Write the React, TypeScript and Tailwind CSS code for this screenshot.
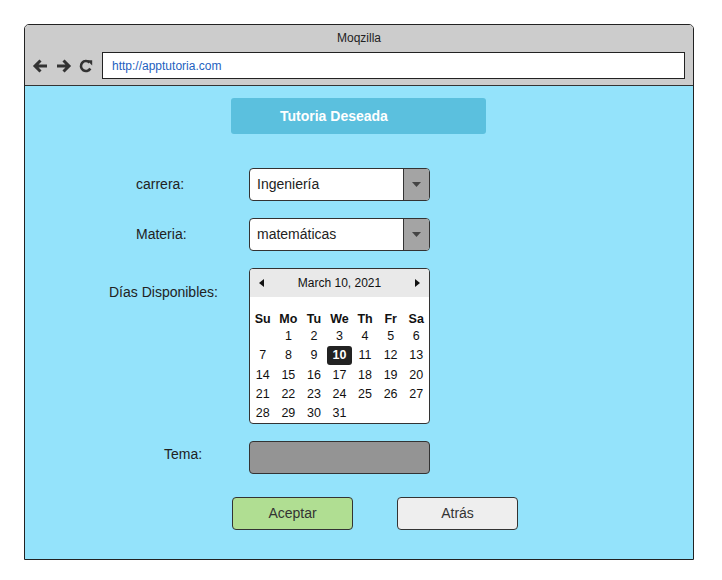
import React from "react";

const WEEKS: (number | null)[][] = [
  [null, 1, 2, 3, 4, 5, 6],
  [7, 8, 9, 10, 11, 12, 13],
  [14, 15, 16, 17, 18, 19, 20],
  [21, 22, 23, 24, 25, 26, 27],
  [28, 29, 30, 31, null, null, null],
];

const DAYS = ["Su", "Mo", "Tu", "We", "Th", "Fr", "Sa"];

function Select({ value }: { value: string }) {
  return (
    <div className="flex h-[33px] w-[181px] overflow-hidden rounded-[4px] border border-[#333] bg-white">
      <div className="flex flex-1 items-center pl-[7px] text-[14px] text-[#222]">{value}</div>
      <div className="flex w-[26px] items-center justify-center border-l border-[#333] bg-[#a4a4a4]">
        <svg width="9" height="5" viewBox="0 0 9 5">
          <path d="M0 0h9L4.5 5z" fill="#444" />
        </svg>
      </div>
    </div>
  );
}

function Calendar() {
  return (
    <div className="w-[181px] overflow-hidden rounded-[4px] border border-[#333] bg-white text-[12.5px] text-[#111]">
      <div className="flex h-[28px] items-center justify-between bg-[#e9e9e9] px-[9px]">
        <svg width="5" height="8" viewBox="0 0 5 8">
          <path d="M5 0v8L0 4z" fill="#111" />
        </svg>
        <span className="text-[12px]">March 10, 2021</span>
        <svg width="5" height="8" viewBox="0 0 5 8">
          <path d="M0 0v8l5-4z" fill="#111" />
        </svg>
      </div>
      <div className="pt-[13px]">
        <div className="grid h-[17px] grid-cols-7 items-center font-bold">
          {DAYS.map((d) => (
            <div key={d} className="text-center">
              {d}
            </div>
          ))}
        </div>
        {WEEKS.map((w, i) => (
          <div key={i} className="grid h-[19.2px] grid-cols-7 items-center">
            {w.map((n, j) => (
              <div key={j} className="flex justify-center">
                {n === 10 ? (
                  <span className="flex h-[19px] w-[26px] items-center justify-center rounded-[3px] bg-[#222] font-bold text-white">
                    10
                  </span>
                ) : (
                  <span>{n ?? ""}</span>
                )}
              </div>
            ))}
          </div>
        ))}
      </div>
    </div>
  );
}

export default function App() {
  return (
    <div className="h-[580px] w-[722px] bg-white pl-[24px] pt-[24px] font-['Liberation_Sans',Arial,sans-serif]">
      <div className="flex h-[536px] w-[670px] flex-col overflow-hidden rounded-t-[5px] border border-[#222]">
        {/* browser chrome */}
        <div className="h-[61px] border-b border-[#333] bg-[#cccccc]">
          <div className="pt-[4px] text-center text-[12px] text-[#222]">Moqzilla</div>
          <div className="mt-[5px] flex items-center">
            <div className="flex items-center gap-[6px] pl-[7px]">
              <svg width="17" height="16" viewBox="0 0 17 16">
                <path d="M15 8H3M8.5 2.5L3 8l5.5 5.5" stroke="#333" strokeWidth="3" fill="none" />
              </svg>
              <svg width="17" height="16" viewBox="0 0 17 16">
                <path d="M2 8h12M8.5 2.5L14 8l-5.5 5.5" stroke="#333" strokeWidth="3" fill="none" />
              </svg>
              <svg width="16" height="16" viewBox="0 0 16 16">
                <path d="M12.3 10.5A5 5 0 1 1 11.5 4.5" stroke="#333" strokeWidth="2.6" fill="none" />
                <path d="M9 2.2h5.2v5.3z" fill="#333" />
              </svg>
            </div>
            <div className="ml-[8px] flex h-[27px] w-[583px] items-center border border-[#222] bg-white pl-[9px] text-[12px] text-[#1e5fc0]">
              http://apptutoria.com
            </div>
          </div>
        </div>

        {/* page */}
        <div className="flex-1 bg-[#94e3fb]">
          <div className="ml-[206px] mt-[12px] flex h-[36px] w-[255px] items-center rounded-[3px] bg-[#5bc0de] pl-[49px] text-[14px] font-bold text-white">
            Tutoria Deseada
          </div>

          <div className="mt-[34px] flex items-center">
            <div className="w-[224px] pl-[111px] text-[14px] text-[#222]">carrera:</div>
            <Select value="Ingeniería" />
          </div>

          <div className="mt-[17px] flex items-center">
            <div className="w-[224px] pl-[111px] text-[14px] text-[#222]">Materia:</div>
            <Select value="matemáticas" />
          </div>

          <div className="mt-[17px] flex items-start">
            <div className="w-[224px] pl-[84px] pt-[14px] text-[14px] text-[#222]">Días Disponibles:</div>
            <Calendar />
          </div>

          <div className="mt-[17px] flex items-center">
            <div className="w-[224px] pb-[6px] pl-[139px] text-[14px] text-[#222]">Tema:</div>
            <div className="h-[33px] w-[181px] rounded-[4px] border border-[#333] bg-[#949494]" />
          </div>

          <div className="mt-[23px] flex">
            <button className="ml-[207px] h-[33px] w-[121px] rounded-[4px] border border-[#333] bg-[#b0de92] text-[14px] text-[#333]">
              Aceptar
            </button>
            <button className="ml-[44px] h-[33px] w-[121px] rounded-[4px] border border-[#333] bg-[#eeeeee] text-[14px] text-[#333]">
              Atrás
            </button>
          </div>
        </div>
      </div>
    </div>
  );
}
